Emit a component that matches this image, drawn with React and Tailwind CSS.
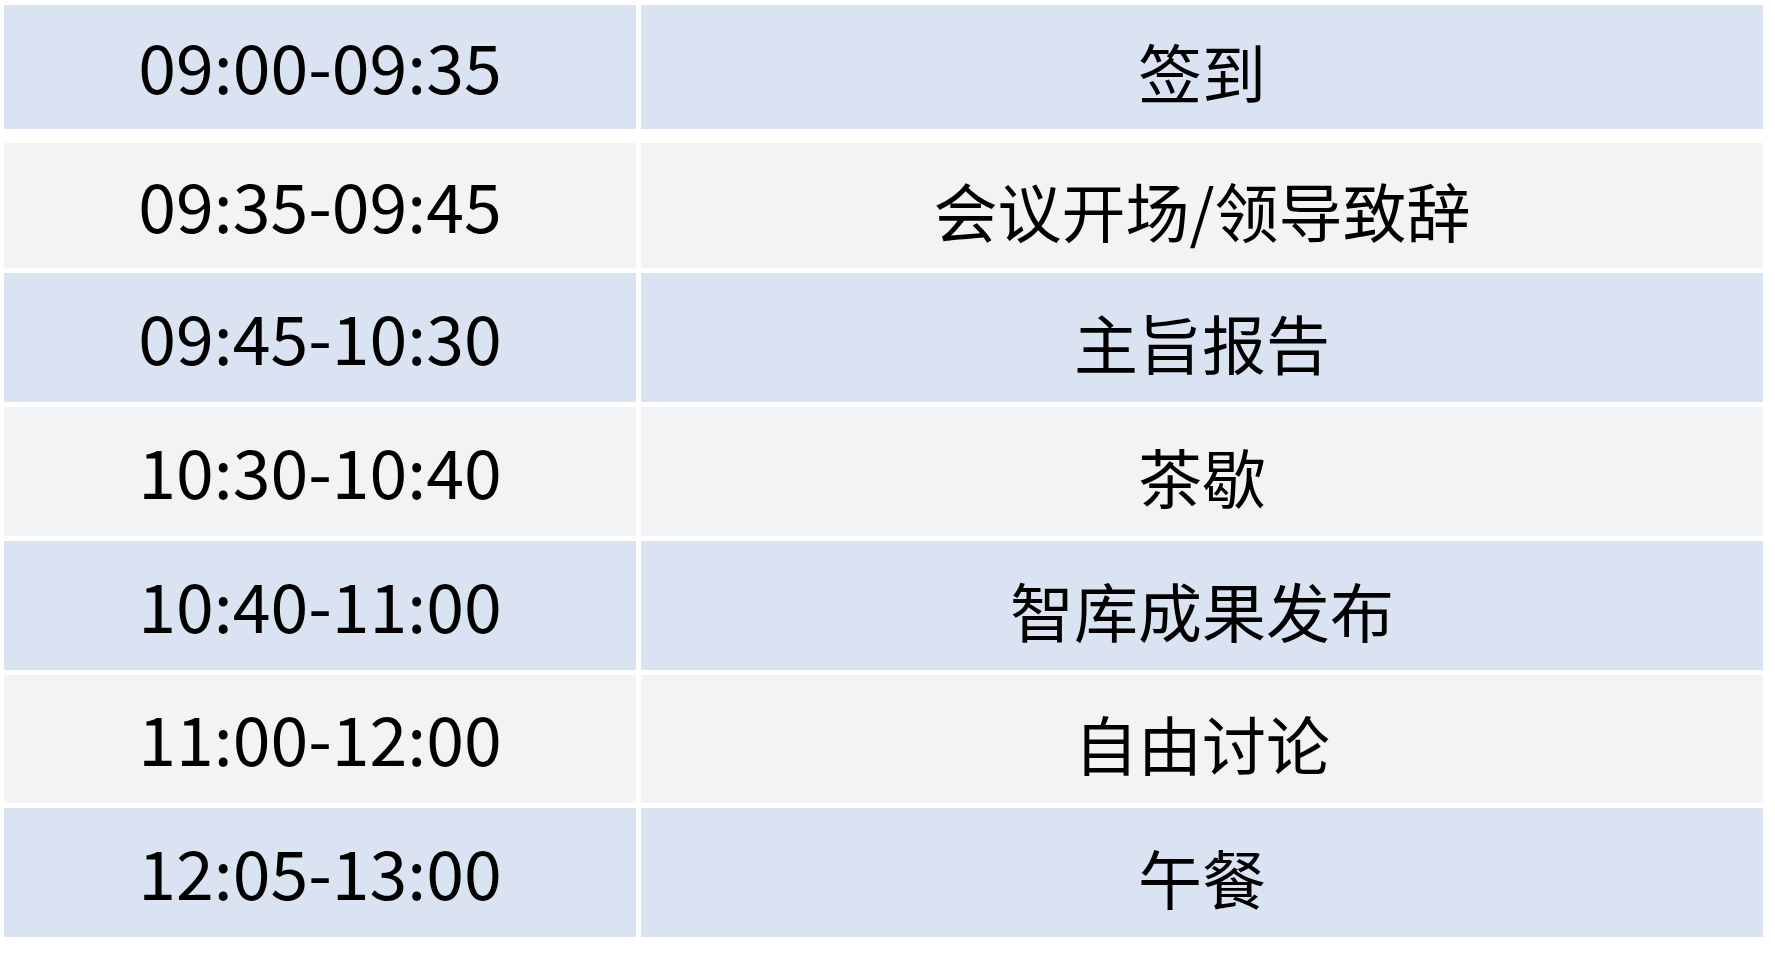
const rows = [
  { time: '09:00-09:35', item: '签到', tone: 'blue', h: 'h-[124px]', gap: 'mb-[14px]' },
  { time: '09:35-09:45', item: '会议开场/领导致辞', tone: 'gray', h: 'h-[125px]', gap: 'mb-[5px]' },
  { time: '09:45-10:30', item: '主旨报告', tone: 'blue', h: 'h-[129px]', gap: 'mb-[5px]' },
  { time: '10:30-10:40', item: '茶歇', tone: 'gray', h: 'h-[129px]', gap: 'mb-[5px]' },
  { time: '10:40-11:00', item: '智库成果发布', tone: 'blue', h: 'h-[129px]', gap: 'mb-[5px]' },
  { time: '11:00-12:00', item: '自由讨论', tone: 'gray', h: 'h-[128px]', gap: 'mb-[5px]' },
  { time: '12:05-13:00', item: '午餐', tone: 'blue', h: 'h-[129px]', gap: '' },
];

const font = { fontFamily: '"Noto Sans CJK SC", "Noto Sans", sans-serif' };

function Cell({ tone, className, children }) {
  const bg = tone === 'blue' ? 'bg-[#d9e3f2]' : 'bg-[#f2f3f5]';
  return (
    <div className={`${bg} ${className} flex items-center justify-center text-black`}>
      {children}
    </div>
  );
}

export default function App() {
  return (
    <div className="w-[1775px] h-[956px] bg-white pl-[4px] pt-[5px]" style={font}>
      {rows.map((r) => (
        <div key={r.time} className={`flex gap-[5px] ${r.h} ${r.gap}`}>
          <Cell tone={r.tone} className="w-[632px] text-[68px] leading-none pb-[4px]">
            {r.time}
          </Cell>
          <Cell tone={r.tone} className="w-[1122px] text-[64px] leading-none pt-[6px]">
            {r.item}
          </Cell>
        </div>
      ))}
    </div>
  );
}
